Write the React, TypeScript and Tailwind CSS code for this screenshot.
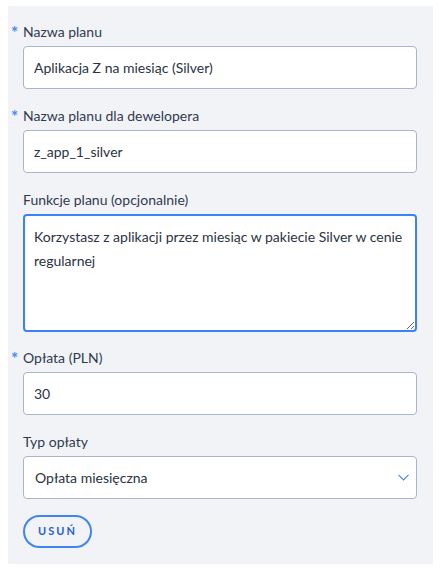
const font = { fontFamily: "Lato, 'Noto Sans', sans-serif" };

function Label({ children, required }: { children: React.ReactNode; required?: boolean }) {
  return (
    <label className="relative mb-1 block h-5 text-[14px] leading-5 text-[#2f3b4f]">
      {required && (
        <span className="absolute -left-[12px] top-[3px] text-[17px] font-bold leading-4 text-[#4a8af4]">*</span>
      )}
      {children}
    </label>
  );
}

function TextInput({ value }: { value: string }) {
  return (
    <input
      readOnly
      value={value}
      className="block h-[43px] w-full rounded-[4px] border border-[#aab5cc] bg-white px-[10px] text-[14px] text-[#2a3342] outline-none"
      style={font}
    />
  );
}

export default function App() {
  return (
    <div className="min-h-[574px] bg-white pt-[6px] pl-2 pr-[7px]" style={font}>
      <div className="bg-[#f2f3f7] pt-4 pb-4 pl-[15px] pr-[16px]">
        <div className="mb-[17px]">
          <Label required>Nazwa planu</Label>
          <TextInput value="Aplikacja Z na miesiąc (Silver)" />
        </div>

        <div className="mb-[17px]">
          <Label required>Nazwa planu dla dewelopera</Label>
          <TextInput value="z_app_1_silver" />
        </div>

        <div className="mb-[16px]">
          <Label>Funkcje planu (opcjonalnie)</Label>
          <textarea
            readOnly
            defaultValue="Korzystasz z aplikacji przez miesiąc w pakiecie Silver w cenie regularnej"
            className="block h-[118px] w-full rounded-[4px] border-2 border-[#3b82f6] bg-white px-[9px] py-[9px] text-[14px] leading-6 text-[#2a3342] outline-none"
            style={font}
          />
        </div>

        <div className="mb-[17px]">
          <Label required>Opłata (PLN)</Label>
          <TextInput value="30" />
        </div>

        <div className="mb-[16px]">
          <Label>Typ opłaty</Label>
          <div className="flex h-[43px] w-full items-center justify-between rounded-[4px] border border-[#aab5cc] bg-white pl-[11px] pr-[7px] text-[14px] text-[#2a3342]">
            <span>Opłata miesięczna</span>
            <svg width="11" height="7" viewBox="0 0 11 7" fill="none" stroke="#4a8af4" strokeWidth="1.2">
              <polyline points="0.5,0.8 5.5,5.8 10.5,0.8" />
            </svg>
          </div>
        </div>

        <button className="flex h-[33px] w-[69px] items-center justify-center rounded-full border-2 border-[#3f85f2] text-[11px] font-bold tracking-[0.18em] text-[#1f5fd6]">
          USUŃ
        </button>
      </div>
    </div>
  );
}
